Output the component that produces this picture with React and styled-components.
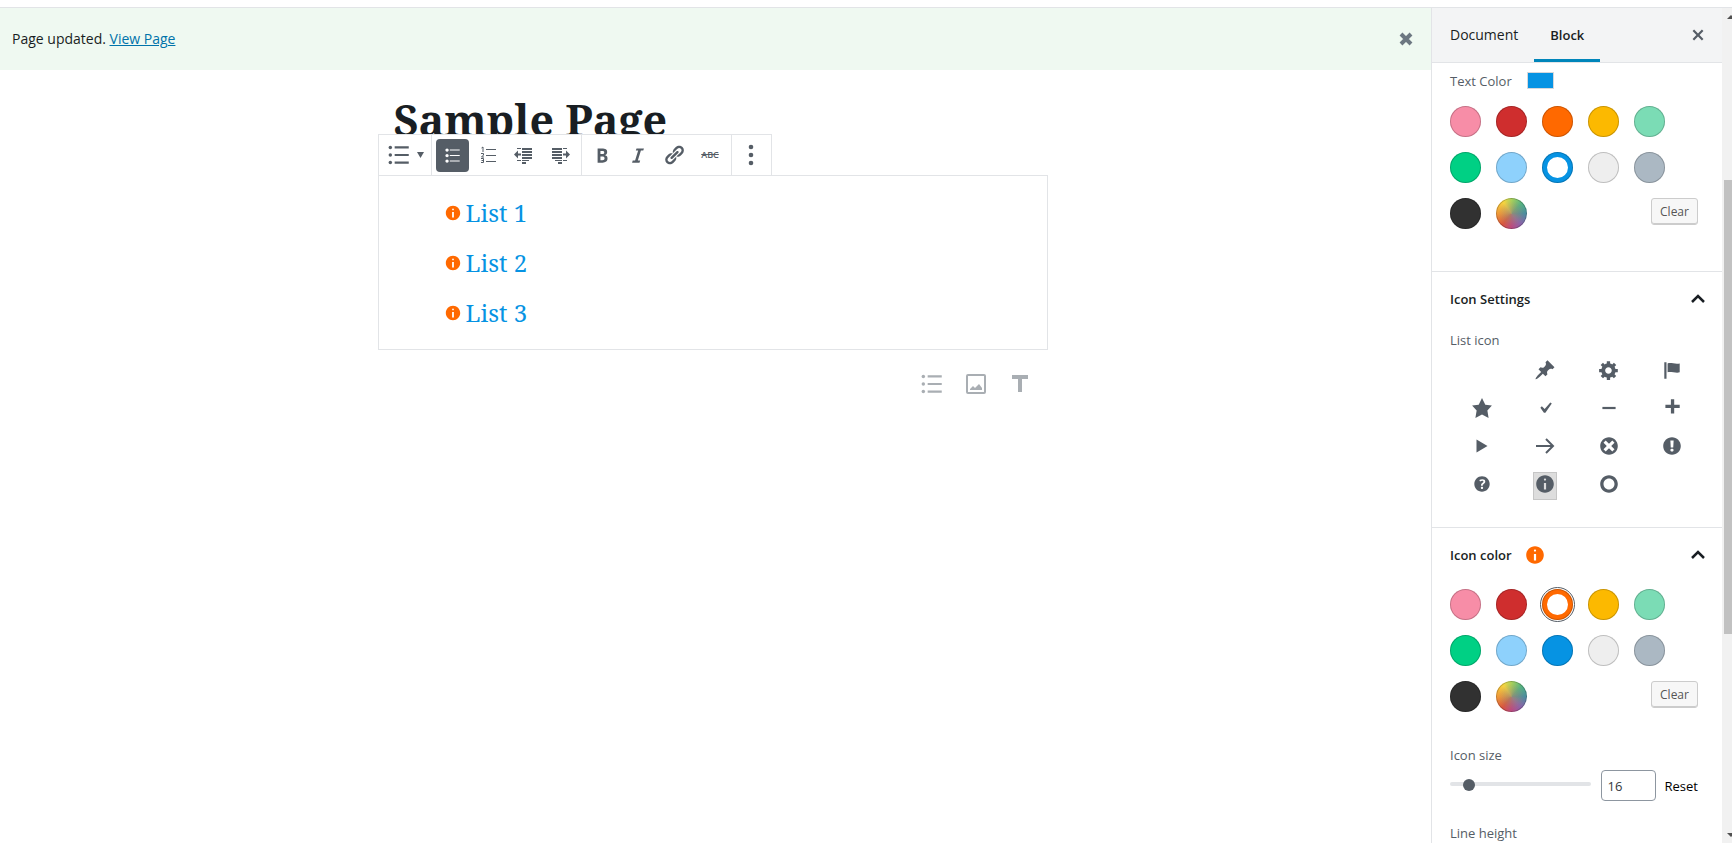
import React, { useState } from "react";
import styled, { createGlobalStyle } from "styled-components";

const GlobalStyle = createGlobalStyle`
  *, *::before, *::after { box-sizing: border-box; }
  body {
    margin: 0;
    background: #fff;
    color: #191e23;
    font: 14px/20px "Open Sans", "Noto Sans", sans-serif;
  }
  button, input { font: inherit; color: inherit; }
  button { padding: 0; border: 0; background: none; cursor: pointer; }
  h1, h2, p, ul { margin: 0; padding: 0; }
`;

const Shell = styled.div`
  display: flex;
  flex-direction: column;
  height: 100vh;
  overflow: hidden;
`;

const TopStrip = styled.header`
  flex: none;
  height: 8px;
  border-bottom: 1px solid #e2e4e7;
`;

const Workspace = styled.div`
  display: flex;
  flex: 1;
  min-height: 0;
`;

const Main = styled.main`
  flex: 1;
  min-width: 0;
`;

const Notice = styled.div`
  display: flex;
  align-items: center;
  justify-content: space-between;
  height: 62px;
  padding: 0 14px 0 12px;
  background: #eff9f1;

  a { color: #0073aa; }
`;

const IconButton = styled.button`
  display: flex;
  align-items: center;
  justify-content: center;
  color: ${(p) => p.$color || "#555d66"};
`;

const Canvas = styled.div`
  padding: 20px 6px 0 0;
`;

const Column = styled.div`
  max-width: 670px;
  margin: 0 auto;
`;

const Title = styled.h1`
  padding-left: 16px;
  height: 51px;
  font: 700 43px/60px "Noto Serif", "Droid Serif", "Liberation Serif", serif;
  white-space: nowrap;
`;

const Toolbar = styled.div`
  position: relative;
  display: flex;
  width: max-content;
  height: 42px;
  margin-top: -7px;
  margin-bottom: -1px;
  border: 1px solid #e2e4e7;
  background: #fff;
`;

const ToolGroup = styled.div`
  display: flex;
  align-items: center;
  justify-content: center;
  gap: 3px;
  width: ${(p) => p.$width}px;

  & + & { border-left: 1px solid #e2e4e7; }
`;

const ToolButton = styled(IconButton)`
  gap: 5px;
  min-width: 33px;
  height: 33px;
  border-radius: 4px;
  background: ${(p) => (p.$active ? "#555d66" : "transparent")};
  color: ${(p) => (p.$active ? "#fff" : "#555d66")};
`;

const Strike = styled.s`
  font-size: 9px;
  font-weight: 600;
  line-height: 20px;
`;

const ListBlock = styled.ul`
  list-style: none;
  padding: 12px 0 11px 65px;
  border: 1px solid #e2e4e7;
  color: #0693e3;
  font: 24px/50px "Noto Serif", "Droid Serif", "Liberation Serif", serif;

  li { display: flex; align-items: center; gap: 4px; }
`;

const Inserter = styled.div`
  display: flex;
  justify-content: flex-end;
  gap: 18px;
  padding: 21px 15px 0 0;
`;

const Sidebar = styled.aside`
  display: flex;
  flex: none;
  width: 301px;
  border-left: 1px solid #e2e4e7;
`;

const SidebarBody = styled.div`
  flex: 1;
  min-width: 0;
  overflow: hidden;
`;

const ScrollTrack = styled.div`
  display: flex;
  flex-direction: column;
  flex: none;
  width: 10px;
  padding-left: 2px;
  background: #f1f1f1;
  color: #505050;
  overflow: hidden;
`;

const ScrollSpace = styled.div`
  flex: ${(p) => p.$grow} 1 0;
`;

const ScrollThumb = styled.div`
  flex: 454 1 0;
  background: #c1c1c1;
`;

const Tabs = styled.div`
  display: flex;
  align-items: center;
  height: 55px;
  padding: 0 13px 0 2px;
  border-bottom: 1px solid #e2e4e7;
  background: #f3f4f5;
`;

const Tab = styled.button`
  height: 54px;
  padding: 2px 16px 0;
  border-bottom: 3px solid ${(p) => (p.$active ? "#0085ba" : "transparent")};
  font-size: ${(p) => (p.$active ? 13 : 14)}px;
  font-weight: ${(p) => (p.$active ? 600 : 400)};
`;

const TabClose = styled(IconButton)`
  margin-left: auto;
`;

const Panel = styled.section`
  padding: 0 24px ${(p) => p.$bottom || 0}px 18px;
  border-bottom: 1px solid #e2e4e7;
`;

const PanelTitle = styled.h2`
  font-size: 13px;
  font-weight: 600;

  button {
    display: flex;
    align-items: center;
    gap: 12px;
    width: 100%;
    height: 53px;
  }
  svg:last-child { margin-left: auto; margin-right: -11px; }
`;

const Label = styled.label`
  display: flex;
  align-items: center;
  gap: 15px;
  height: 30px;
  color: #555d66;
  font-size: 13px;
`;

const ColorLabel = styled(Label)`
  height: 35px;
`;

const ColorChip = styled.span`
  width: 27px;
  height: 17px;
  border: 1px solid #d5d8dc;
  background: ${(p) => p.$color};
`;

const Palette = styled.div`
  display: grid;
  grid-template-columns: repeat(4, 31px) 1fr;
  gap: 15px;
  padding-top: 8px;
`;

const Swatch = styled.button`
  width: 31px;
  height: 31px;
  border-radius: 50%;
  background: ${(p) => (p.$selected ? "#fff" : p.$color)};
  box-shadow: inset 0 0 0 1px rgba(0, 0, 0, 0.2)
    ${(p) => (p.$selected ? `, inset 0 0 0 5px ${p.$color}` : "")};
  outline: ${(p) => (p.$focused ? "1px solid #555d66" : "none")};
  outline-offset: 1px;
`;

const Clear = styled.button`
  grid-column: 5;
  justify-self: end;
  width: 47px;
  height: 27px;
  border: 1px solid #ccc;
  border-radius: 3px;
  background: #f7f7f7;
  box-shadow: inset 0 -1px 0 #ccc;
  color: #555;
  font-size: 12px;
  line-height: 24px;
`;

const IconGrid = styled.div`
  display: grid;
  grid-template-columns: repeat(4, 1fr);
  justify-items: center;
  row-gap: 10px;
  margin-right: -6px;
  padding-top: 3px;
`;

const IconChoice = styled(IconButton)`
  width: 24px;
  height: 28px;
  padding-bottom: 4px;
  border: 1px solid ${(p) => (p.$selected ? "#c6c6c6" : "transparent")};
  background: ${(p) => (p.$selected ? "#ddd" : "transparent")};
`;

const SizeField = styled.div`
  padding: 28px 0 17px;
`;

const SizeRow = styled.div`
  display: flex;
  align-items: center;
  height: 31px;
`;

const Range = styled.input`
  appearance: none;
  flex: 1;
  min-width: 0;
  height: 12px;
  margin: 0 10px 4px 0;
  background: none;

  &::-webkit-slider-runnable-track {
    height: 4px;
    border-radius: 2px;
    background: #e2e4e7;
  }
  &::-webkit-slider-thumb {
    appearance: none;
    width: 12px;
    height: 12px;
    margin-top: -3px;
    border-radius: 50%;
    background: #555d66;
  }
`;

const NumberBox = styled.input`
  appearance: textfield;
  width: 55px;
  height: 31px;
  padding: 0 6px;
  border: 1px solid #8d96a0;
  border-radius: 4px;
  background: #fff;
  color: #32373c;
  font-size: 13px;

  &::-webkit-inner-spin-button { display: none; }
`;

const Reset = styled.button`
  margin-left: 9px;
  color: #000;
  font-size: 13px;
`;

const DISC = "M10 2c4.42 0 8 3.58 8 8s-3.58 8-8 8-8-3.58-8-8 3.58-8 8-8z";

const GLYPHS = {
  info: DISC + "m1 4c0-.55-.45-1-1-1s-1 .45-1 1 .45 1 1 1 1-.45 1-1zm0 9V9H9v6h2z",
  pin: "M10.44 3.02l1.82-1.82 6.36 6.35-1.83 1.82c-1.05-.68-2.48-.57-3.41.36l-.75.75c-.92.93-1.04 2.35-.35 3.41l-1.83 1.82-2.41-2.41-2.8 2.79c-.42.42-3.38 2.71-3.8 2.29s1.86-3.39 2.28-3.81l2.79-2.79L4.1 9.36l1.83-1.82c1.05.69 2.48.57 3.4-.36l.75-.75c.93-.92 1.05-2.35.36-3.41z",
  gear: "M18 12h-2.18c-.17.7-.44 1.35-.81 1.93l1.54 1.54-2.1 2.1-1.54-1.54c-.58.36-1.23.63-1.91.79V19H8v-2.18c-.68-.16-1.33-.43-1.91-.79l-1.54 1.54-2.12-2.12 1.54-1.54c-.36-.58-.63-1.23-.79-1.91H1V9.03h2.17c.16-.7.44-1.35.8-1.94L2.43 5.55l2.1-2.1 1.54 1.54c.58-.37 1.24-.64 1.93-.81V2h3v2.18c.68.16 1.33.43 1.91.79l1.54-1.54 2.12 2.12-1.54 1.54c.36.59.64 1.24.8 1.94H18V12zm-8.5 1.5c1.66 0 3-1.34 3-3s-1.34-3-3-3-3 1.34-3 3 1.34 3 3 3z",
  flag: "M5 18V3H3v15h2zm1-6V4c3-1 7 1 11 0v8c-3 1.27-8-1-11 0z",
  star: "M10 1l3 6 6 .75-4.12 4.62L16 19l-6-3-6 3 1.13-6.63L1 7.75 7 7z",
  check: "M14.83 4.89l1.34.94-5.81 8.38H9.02L5.78 9.67l1.34-1.25 2.57 2.4z",
  minus: "M4 9h12v2H4V9z",
  plus: "M17 7v3h-5v5H9v-5H4V7h5V2h3v5h5z",
  play: "M5 4l10 6-10 6V4z",
  dismiss: DISC + "m5 11l-3-3 3-3-2-2-3 3-3-3-2 2 3 3-3 3 2 2 3-3 3 3z",
  warning: DISC + "m1.13 9.38l.35-6.46H8.52l.35 6.46h2.26zm-.09 3.36c.24-.23.37-.55.37-.96 0-.42-.12-.74-.36-.97s-.59-.35-1.06-.35-.82.12-1.07.35-.37.55-.37.97c0 .41.13.73.38.96.26.23.61.34 1.06.34s.8-.11 1.05-.34z",
  help: "M17 10c0-3.87-3.14-7-7-7-3.87 0-7 3.13-7 7s3.13 7 7 7c3.86 0 7-3.13 7-7zm-6.3 1.48H9.14v-.43c0-.38.08-.7.24-.98s.46-.57.88-.89c.41-.29.68-.53.81-.71.14-.18.2-.39.2-.62 0-.25-.09-.44-.28-.58-.19-.13-.45-.19-.79-.19-.58 0-1.25.19-2 .57l-.64-1.28c.87-.49 1.8-.74 2.77-.74.81 0 1.45.2 1.92.58.48.39.71.91.71 1.55 0 .43-.09.8-.29 1.11-.19.32-.57.67-1.11 1.06-.38.28-.61.49-.71.63-.1.15-.15.34-.15.57v.35zm-1.47 2.74c-.18-.17-.27-.42-.27-.73 0-.33.08-.58.26-.75s.43-.25.77-.25c.32 0 .57.09.75.26s.27.42.27.74c0 .3-.09.55-.27.72-.18.18-.43.27-.75.27-.33 0-.58-.09-.76-.26z",
  ring: DISC + "m0 13c2.76 0 5-2.24 5-5s-2.24-5-5-5-5 2.24-5 5 2.24 5 5 5z",
  close: "M14.95 6.46L11.41 10l3.54 3.54-1.41 1.41L10 11.42l-3.53 3.53-1.42-1.42L8.58 10 5.05 6.47l1.42-1.42L10 8.58l3.54-3.53z",
  bold: "M6 4v13h4.54c1.37 0 2.46-.33 3.26-1 .8-.66 1.2-1.58 1.2-2.77 0-.84-.17-1.51-.51-2.01s-.9-.85-1.67-1.03v-.09c.57-.1 1.02-.4 1.36-.9s.51-1.13.51-1.91c0-1.14-.39-1.98-1.17-2.5C12.75 4.26 11.5 4 9.78 4H6zm2.57 5.15V6.26h1.36c.73 0 1.27.11 1.61.32.34.22.51.58.51 1.07 0 .54-.16.92-.47 1.15s-.82.35-1.51.35h-1.5zm0 2.19h1.6c1.44 0 2.16.53 2.16 1.61 0 .6-.17 1.05-.51 1.34s-.86.43-1.57.43H8.57v-3.38z",
  italic: "M14.78 6h-2.13l-2.8 9h2.12l-.62 2H4.6l.62-2h2.14l2.8-9H8.03l.62-2h6.75z",
  link: "M17.74 2.76c1.68 1.69 1.68 4.41 0 6.1l-1.53 1.52c-1.12 1.12-2.7 1.47-4.14 1.09l2.62-2.61.76-.77.76-.76c.84-.84.84-2.2 0-3.04-.84-.85-2.2-.85-3.04 0l-.77.76-3.38 3.38c-.37-1.44-.02-3.02 1.1-4.14l1.52-1.53c1.69-1.68 4.42-1.68 6.1 0zM8.59 13.43l5.34-5.34c.42-.42.42-1.1 0-1.52-.44-.43-1.13-.39-1.53 0l-5.33 5.34c-.42.42-.42 1.1 0 1.52.44.43 1.13.39 1.52 0zm-.76 2.29l4.14-4.15c.38 1.44.03 3.02-1.09 4.14l-1.52 1.53c-1.69 1.68-4.41 1.68-6.1 0-1.68-1.68-1.68-4.42 0-6.1l1.53-1.52c1.12-1.12 2.7-1.47 4.14-1.1l-4.14 4.15c-.85.84-.85 2.2 0 3.05.84.84 2.2.84 3.04 0z",
  ul: "M5.5 7C4.67 7 4 6.33 4 5.5 4 4.68 4.67 4 5.5 4 6.32 4 7 4.68 7 5.5 7 6.33 6.32 7 5.5 7zM8 5h9v1H8V5zm-2.5 7c-.83 0-1.5-.67-1.5-1.5C4 9.68 4.67 9 5.5 9c.82 0 1.5.68 1.5 1.5 0 .83-.68 1.5-1.5 1.5zM8 10h9v1H8v-1zm-2.5 7c-.83 0-1.5-.67-1.5-1.5 0-.82.67-1.5 1.5-1.5.82 0 1.5.68 1.5 1.5 0 .83-.68 1.5-1.5 1.5zM8 15h9v1H8v-1z",
  outdent: "M3 3h4v1H3zM8 3h10v2H8zM8 6h10v2H8zM8 9h10v2H8zM3 15h4v1H3zM8 12h10v2H8zM8 15h7v1H8zM8 17h4v2H8zM0 9.500l4-4v3h3v2H4v3z",
  indent: "M13 3h4v1h-4zM2 3h10v2H2zM2 6h10v2H2zM2 9h10v2H2zM13 15h4v1h-4zM2 12h10v2H2zM5 15h7v1H5zM8 17h4v2H8zM20 9.500l-4-4v3h-3v2h3v3z",
};

const Glyph = ({ name, size = 22 }) => (
  <svg width={size} height={size} viewBox="0 0 20 20" fill="currentColor" aria-hidden="true">
    <path fillRule="evenodd" d={GLYPHS[name]} />
  </svg>
);

const ArrowGlyph = () => (
  <svg width="22" height="22" viewBox="0 0 22 22" fill="none" stroke="currentColor" strokeWidth="2" aria-hidden="true">
    <path d="M2 11h17M12 4l7 7-7 7" />
  </svg>
);

const Bullets = () => (
  <svg width="26" height="26" viewBox="0 0 24 24" fill="currentColor" aria-hidden="true">
    <circle cx="4" cy="5" r="1.600" />
    <circle cx="4" cy="12" r="1.600" />
    <circle cx="4" cy="19" r="1.600" />
    <path d="M8 4h13v2H8zM8 11h13v2H8zM8 18h13v2H8z" />
  </svg>
);

const NumberedGlyph = () => (
  <svg width="22" height="22" viewBox="0 0 22 22" fill="currentColor" aria-hidden="true">
    <path d="M9 5h10v1H9zM9 11h10v1H9zM9 17h10v1H9z" />
    <path
      fill="none"
      stroke="currentColor"
      d="M4.500 4l1.500-1v5M4 9.500h2.500v1.500L4.500 13H7M4 14.500h2.500v4H4M4.500 16.500h2"
    />
  </svg>
);

const Caret = () => (
  <svg width="7" height="6" viewBox="0 0 7 6" fill="currentColor" aria-hidden="true">
    <path d="M0 0h7L3.500 6z" />
  </svg>
);

const Dots = () => (
  <svg width="22" height="22" viewBox="0 0 22 22" fill="currentColor" aria-hidden="true">
    <circle cx="11" cy="3" r="2.300" />
    <circle cx="11" cy="11" r="2.300" />
    <circle cx="11" cy="19" r="2.300" />
  </svg>
);

const ImageGlyph = () => (
  <svg width="26" height="26" viewBox="0 0 26 26" fill="currentColor" aria-hidden="true">
    <rect x="4" y="4" width="18" height="18" rx="1" fill="none" stroke="currentColor" strokeWidth="2" />
    <path d="M7 19v-1l3-3 2 2 4-4 3 4v2z" />
  </svg>
);

const TextGlyph = () => (
  <svg width="26" height="26" viewBox="0 0 26 26" fill="currentColor" aria-hidden="true">
    <path d="M5 4h16v4h-6v13h-4V8H5z" />
  </svg>
);

const Chevron = () => (
  <svg width="22" height="22" viewBox="0 0 22 22" fill="none" stroke="currentColor" strokeWidth="2.500" aria-hidden="true">
    <path d="M5 14l6-6 6 6" />
  </svg>
);

const ScrollArrow = ({ down }) => (
  <svg width="14" height="17" viewBox="0 0 14 17" fill="currentColor" aria-hidden="true">
    <path d={down ? "M3 7h8l-4 4z" : "M3 11h8l-4-4z"} />
  </svg>
);

const COLORS = [
  ["Pale pink", "#f78da7"],
  ["Vivid red", "#cf2e2e"],
  ["Luminous vivid orange", "#ff6900"],
  ["Luminous vivid amber", "#fcb900"],
  ["Light green cyan", "#7bdcb5"],
  ["Vivid green cyan", "#00d084"],
  ["Pale cyan blue", "#8ed1fc"],
  ["Vivid cyan blue", "#0693e3"],
  ["Very light gray", "#eeeeee"],
  ["Cyan bluish gray", "#abb8c3"],
  ["Very dark gray", "#313131"],
];

const WHEEL =
  "radial-gradient(circle, rgba(160, 140, 110, 0.8), rgba(160, 140, 110, 0) 60%), conic-gradient(#a9d05a, #55b282 45deg, #4b8d9f 90deg, #8d62a8 140deg, #bb4a80 180deg, #d9573f 220deg, #f09a38 270deg, #f6d53f 325deg, #a9d05a)";

const ColorPalette = ({ value, onChange, focused }) => (
  <Palette>
    {COLORS.map(([name, color]) => (
      <Swatch
        key={color}
        aria-label={name}
        $color={color}
        $selected={value === color}
        $focused={focused && value === color}
        onClick={() => onChange(color)}
      />
    ))}
    <Swatch aria-label="Custom color" $color={WHEEL} />
    <Clear onClick={() => onChange("")}>Clear</Clear>
  </Palette>
);

const LIST_ICONS = [
  "none", "pin", "gear", "flag",
  "star", "check", "minus", "plus",
  "play", "arrow", "dismiss", "warning",
  "help", "info", "ring",
];

export default function App() {
  const [textColor, setTextColor] = useState("#0693e3");
  const [iconColor, setIconColor] = useState("#ff6900");
  const [icon, setIcon] = useState("info");
  const [size, setSize] = useState(16);

  return (
    <>
      <GlobalStyle />
      <Shell>
        <TopStrip />
        <Workspace>
          <Main>
            <Notice>
              <p>
                Page updated. <a href="#view">View Page</a>
              </p>
              <IconButton aria-label="Dismiss notice" $color="#6c7781">
                <svg width="22" height="22" viewBox="0 0 22 22" stroke="currentColor" strokeWidth="4" aria-hidden="true">
                  <path d="M6 6l10 10M16 6L6 16" />
                </svg>
              </IconButton>
            </Notice>
            <Canvas>
              <Column>
                <Title>Sample Page</Title>
                <Toolbar>
                  <ToolGroup $width={52}>
                    <ToolButton aria-label="Change block type">
                      <Bullets />
                      <Caret />
                    </ToolButton>
                  </ToolGroup>
                  <ToolGroup $width={150}>
                    <ToolButton aria-label="Bulleted list" $active><Glyph name="ul" /></ToolButton>
                    <ToolButton aria-label="Numbered list"><NumberedGlyph /></ToolButton>
                    <ToolButton aria-label="Outdent"><Glyph name="outdent" size={20} /></ToolButton>
                    <ToolButton aria-label="Indent"><Glyph name="indent" size={20} /></ToolButton>
                  </ToolGroup>
                  <ToolGroup $width={150}>
                    <ToolButton aria-label="Bold"><Glyph name="bold" /></ToolButton>
                    <ToolButton aria-label="Italic"><Glyph name="italic" /></ToolButton>
                    <ToolButton aria-label="Link"><Glyph name="link" /></ToolButton>
                    <ToolButton aria-label="Strikethrough"><Strike>ABC</Strike></ToolButton>
                  </ToolGroup>
                  <ToolGroup $width={40}>
                    <ToolButton aria-label="More options"><Dots /></ToolButton>
                  </ToolGroup>
                </Toolbar>
                <ListBlock>
                  {["List 1", "List 2", "List 3"].map((item) => (
                    <li key={item}>
                      <IconButton as="span" $color="#ff6900"><Glyph name="info" size={18} /></IconButton>
                      {item}
                    </li>
                  ))}
                </ListBlock>
                <Inserter>
                  <IconButton aria-label="Add list" $color="#a9aeb3"><Bullets /></IconButton>
                  <IconButton aria-label="Add image" $color="#a9aeb3"><ImageGlyph /></IconButton>
                  <IconButton aria-label="Add heading" $color="#a9aeb3"><TextGlyph /></IconButton>
                </Inserter>
              </Column>
            </Canvas>
          </Main>

          <Sidebar>
            <SidebarBody>
              <Tabs>
                <Tab>Document</Tab>
                <Tab $active>Block</Tab>
                <TabClose aria-label="Close settings"><Glyph name="close" /></TabClose>
              </Tabs>
              <Panel $bottom={42}>
                <ColorLabel as="p">
                  Text Color <ColorChip $color={textColor} />
                </ColorLabel>
                <ColorPalette value={textColor} onChange={setTextColor} />
              </Panel>
              <Panel $bottom={27}>
                <PanelTitle>
                  <button>Icon Settings <Chevron /></button>
                </PanelTitle>
                <Label as="p">List icon</Label>
                <IconGrid>
                  {LIST_ICONS.map((name) => (
                    <IconChoice
                      key={name}
                      aria-label={name}
                      $selected={icon === name}
                      onClick={() => setIcon(name)}
                    >
                      {name === "arrow" && <ArrowGlyph />}
                      {GLYPHS[name] && <Glyph name={name} />}
                    </IconChoice>
                  ))}
                </IconGrid>
              </Panel>
              <Panel>
                <PanelTitle>
                  <button>
                    Icon color
                    <IconButton as="span" $color={iconColor}><Glyph name="info" /></IconButton>
                    <Chevron />
                  </button>
                </PanelTitle>
                <ColorPalette value={iconColor} onChange={setIconColor} focused />
                <SizeField>
                  <Label htmlFor="icon-size">Icon size</Label>
                  <SizeRow>
                    <Range
                      type="range"
                      aria-label="Icon size slider"
                      min="8"
                      max="90"
                      value={size}
                      onChange={(e) => setSize(Number(e.target.value))}
                    />
                    <NumberBox
                      id="icon-size"
                      type="number"
                      value={size}
                      onChange={(e) => setSize(Number(e.target.value))}
                    />
                    <Reset onClick={() => setSize(16)}>Reset</Reset>
                  </SizeRow>
                </SizeField>
                <Label as="p">Line height</Label>
              </Panel>
            </SidebarBody>
            <ScrollTrack>
              <ScrollArrow />
              <ScrollSpace $grow={155} />
              <ScrollThumb />
              <ScrollSpace $grow={192} />
              <ScrollArrow down />
            </ScrollTrack>
          </Sidebar>
        </Workspace>
      </Shell>
    </>
  );
}
